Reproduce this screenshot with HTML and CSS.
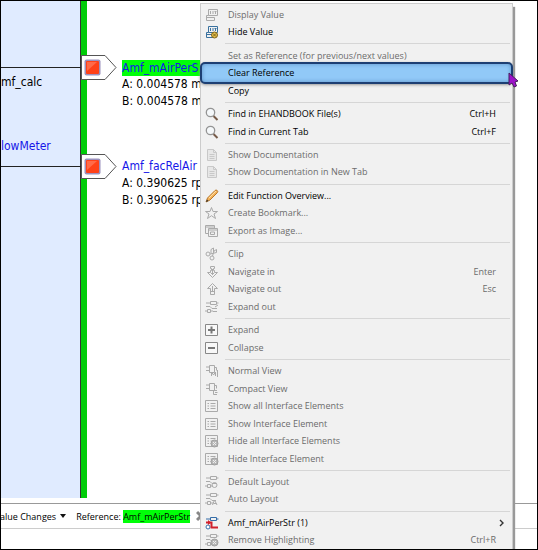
FILE: index.html
```html
<!DOCTYPE html>
<html lang="en">
<head>
<meta charset="utf-8">
<title>Function Overview</title>
<link rel="stylesheet" href="styles.css">
</head>
<body>
<svg class="defs" aria-hidden="true">
  <symbol id="value" viewBox="0 0 14 14"><path d="M3.500 1.500h9v6h-9z" class="o"/><path d="M5.500 3v3M5 3.500h1M8 3v3M10.500 3v3M9.500 3.500h2" class="o"/><path d="M1.500 12.500v-5h2M1.500 9.500h8M1.500 12.500h8v-3" class="o"/></symbol>
  <symbol id="lens" viewBox="0 0 14 14"><path d="M8.500 9l4 4" stroke="#765b49" stroke-width="2"/><circle cx="5.500" cy="5.500" r="4.200" fill="#f5f8fa" stroke="#949494" stroke-width="1.300"/></symbol>
  <symbol id="doc" viewBox="0 0 14 14"><path d="M2.500 1.500h6l3 3v8h-9z" fill="#e7e7e7" stroke="#c8c8c8"/><path d="M8.500 1.500v3h3M4.500 6.500h5M4.500 8.500h5M4.500 10.500h5" class="o"/></symbol>
  <symbol id="down" viewBox="0 0 14 14"><path d="M5.500 1.500h4v2h-1v2h1v2h3l-5 5-5-5h3v-2h1v-2h-1z" class="o"/><path d="M7.500 4v6M6 8.500h3" class="o"/></symbol>
  <symbol id="up" viewBox="0 0 14 14"><path d="M5.500 12.500h4v-6h3l-5-5-5 5h3z" class="o"/><path d="M7.500 4v6M6 9.500h3" class="o"/></symbol>
  <symbol id="blocks" viewBox="0 0 14 14"><path d="M5.500 1.500h6v3h-6zM1 3h4M11.500 3h2M1 6.500h4l2 2h4M2.500 9.500h3v3h-3zM0 11h2M6 11h2" class="o"/></symbol>
  <symbol id="view" viewBox="0 0 14 14"><path d="M4.500 1.500h5v7h-5zM1 3h3M1 6.500h3M9.500 3.500h2v3" class="o"/></symbol>
  <symbol id="list" viewBox="0 0 14 14"><path d="M0.500 1.500h12v11H.5z" class="o"/><path d="M2.500 4.500h1.500M5.500 4.500h5M2.500 7h1.500M5.500 7h5M2.500 9.500h1.500M5.500 9.500h5" class="o"/></symbol>
  <symbol id="off" viewBox="0 0 14 14"><circle cx="9.500" cy="9.500" r="3.500" fill="#b8b8b8" stroke="#a0a0a0"/><path d="M8 8l3 3M11 8l-3 3" stroke="#eee"/></symbol>
</svg>
<main class="app">
  <section class="canvas" aria-label="Diagram">
    <div class="block"></div>
    <span class="line line-a"></span><span class="line line-b"></span>
    <span class="name calc">mf_calc</span>
    <a class="name meter" href="#meter">lowMeter</a>
    <svg class="port port-a" viewBox="0 0 36 26"><path d="M.5.500H24L35 12.500 24 24.500H.5z" fill="#fff" stroke="#555"/><rect x="3.500" y="4.500" width="16" height="16" rx="2" fill="#9b91bd"/><rect x="5" y="6" width="13" height="13" rx="1" fill="#ff4218"/><path d="M6 16V7h10z" fill="#ff6a48"/></svg>
    <svg class="port port-b" viewBox="0 0 36 26"><path d="M.5.500H24L35 12.500 24 24.500H.5z" fill="#fff" stroke="#555"/><rect x="3.500" y="4.500" width="16" height="16" rx="2" fill="#9b91bd"/><rect x="5" y="6" width="13" height="13" rx="1" fill="#ff4218"/><path d="M6 16V7h10z" fill="#ff6a48"/></svg>
    <div class="signal signal-a"><a class="marked" href="#air">Amf_mAirPerS</a><span>A: 0.004578 m</span><span>B: 0.004578 m</span></div>
    <div class="signal signal-b"><a href="#rel">Amf_facRelAir</a><span>A: 0.390625 rp</span><span>B: 0.390625 rp</span></div>
  </section>
  <footer class="bar">
    <button class="drop" type="button">alue Changes <span class="caret"></span></button>
    <span class="ref">Reference: <mark>Amf_mAirPerStr</mark></span>
    <svg class="close" viewBox="0 0 10 12"><path d="M1 2l4 4-4 4M9 2L5 6l4 4" fill="none" stroke="#888" stroke-width="3"/></svg>
  </footer>
  <div class="status"></div>
</main>

<menu class="menu">
  <li><button disabled><svg class="icon"><use href="#value"/></svg><span>Display Value</span></button></li>
  <li><button><svg class="icon blue"><use href="#value"/><circle cx="9.500" cy="10" r="3" fill="#e5c04c" stroke="#80651d"/><path d="M8 8.500l3 3M11 8.500l-3 3" stroke="#80651d"/></svg><span>Hide Value</span></button></li>
  <li class="sep"></li>
  <li><button disabled><i class="icon"></i><span>Set as Reference (for previous/next values)</span></button></li>
  <li class="active"><button><i class="icon"></i><span>Clear Reference</span></button></li>
  <li><button><i class="icon"></i><span>Copy</span></button></li>
  <li class="sep"></li>
  <li><button><svg class="icon"><use href="#lens"/></svg><span>Find in EHANDBOOK File(s)</span><kbd>Ctrl+H</kbd></button></li>
  <li><button><svg class="icon"><use href="#lens"/></svg><span>Find in Current Tab</span><kbd>Ctrl+F</kbd></button></li>
  <li class="sep"></li>
  <li><button disabled><svg class="icon pale"><use href="#doc"/></svg><span>Show Documentation</span></button></li>
  <li><button disabled><svg class="icon pale"><use href="#doc"/></svg><span>Show Documentation in New Tab</span></button></li>
  <li class="sep"></li>
  <li><button><svg class="icon" viewBox="0 0 14 14"><path d="M1 13l1.500-4L10 1.500q1-1 2.200 0t0 2.300L5 11z" fill="#f6b45b" stroke="#b8792e"/><path d="M4 9l7-7" stroke="#ffe0a8"/><path d="M1 13l1-2.500L3.500 12z" fill="#333"/></svg><span>Edit Function Overview...</span></button></li>
  <li><button disabled><svg class="icon" viewBox="0 0 14 14"><path d="M6.500 1.500L8 5.500h4.500L9 8l1.500 4.500-4-2.800-4 2.800L4 8 .5 5.500H5z" class="o"/></svg><span>Create Bookmark...</span></button></li>
  <li><button disabled><svg class="icon" viewBox="0 0 14 14"><path d="M3 9.500H.5v-8h9V4M.5 3h9M3.500 4.500h9v8h-9zM3.500 6h9M5.500 8h4v2.500h-4z" class="o"/></svg><span>Export as Image...</span></button></li>
  <li class="sep"></li>
  <li><button disabled><svg class="icon" viewBox="0 0 14 14"><circle cx="3" cy="7" r="2" class="o"/><circle cx="7" cy="11" r="2" class="o"/><path d="M5 7l6.500-1.500v-3L9 4 7.500 9M6 6V2.500L8.500 1v4" class="o"/></svg><span>Clip</span></button></li>
  <li><button disabled><svg class="icon"><use href="#down"/></svg><span>Navigate in</span><kbd>Enter</kbd></button></li>
  <li><button disabled><svg class="icon"><use href="#up"/></svg><span>Navigate out</span><kbd>Esc</kbd></button></li>
  <li><button disabled><svg class="icon"><use href="#blocks"/><path d="M8 8.500h4M8 11.500h4M10 7l3-2" class="o"/></svg><span>Expand out</span></button></li>
  <li class="sep"></li>
  <li><button disabled><svg class="icon" viewBox="0 0 14 14"><path d="M.5 1.500h12v11H.5z" class="box"/><path d="M3 7h7M6.500 3.500v7" stroke="#777" stroke-width="2"/></svg><span>Expand</span></button></li>
  <li><button disabled><svg class="icon" viewBox="0 0 14 14"><path d="M.5 1.500h12v11H.5z" class="box"/><path d="M3 7h7" stroke="#777" stroke-width="2"/></svg><span>Collapse</span></button></li>
  <li class="sep"></li>
  <li><button disabled><svg class="icon"><use href="#view"/><path d="M6.500 12V8l2 3 2-3v4M12.500 6v7" class="o"/></svg><span>Normal View</span></button></li>
  <li><button disabled><svg class="icon"><use href="#view"/><path d="M12 8.500H8.500v4H12M10 10.500h2.500" class="o"/></svg><span>Compact View</span></button></li>
  <li><button disabled><svg class="icon"><use href="#list"/></svg><span>Show all Interface Elements</span></button></li>
  <li><button disabled><svg class="icon"><use href="#list"/></svg><span>Show Interface Element</span></button></li>
  <li><button disabled><svg class="icon"><use href="#list"/><use href="#off"/></svg><span>Hide all Interface Elements</span></button></li>
  <li><button disabled><svg class="icon"><use href="#list"/><use href="#off"/></svg><span>Hide Interface Element</span></button></li>
  <li class="sep"></li>
  <li><button disabled><svg class="icon"><use href="#blocks"/><circle cx="9.500" cy="10" r="2.500" class="o"/></svg><span>Default Layout</span></button></li>
  <li><button disabled><svg class="icon"><use href="#blocks"/><path d="M7.500 13l2-5 2.500 5M8.500 11.500h3" class="o"/></svg><span>Auto Layout</span></button></li>
  <li class="sep"></li>
  <li><button><svg class="icon" viewBox="0 0 14 14"><path d="M5.500 1.500h6v3h-6zM1 3h4M11.500 3h2" fill="none" stroke="#356da8"/><circle cx="3" cy="11" r="2" fill="#fff" stroke="#356da8"/><path d="M1 6.500h5.500v5H13" fill="none" stroke="#d0202c" stroke-width="2"/><path d="M3 4l3 2.500L3 9z" fill="#d0202c"/></svg><span>Amf_mAirPerStr (1)</span><svg class="more" viewBox="0 0 5 8"><path d="M1 1l3 3-3 3" fill="none" stroke="#333" stroke-width="1.400"/></svg></button></li>
  <li><button disabled><svg class="icon"><use href="#blocks"/><use href="#off"/></svg><span>Remove Highlighting</span><kbd>Ctrl+R</kbd></button></li>
</menu>
<svg class="cursor" viewBox="0 0 11 16"><path d="M1 1v12l3-2 2 4 2.500-1L7 10l3-1z" fill="#9d12c9" stroke="#45205c"/></svg>
</body>
</html>
```
FILE: styles.css
```css
* { box-sizing: border-box; }

body {
  margin: 0;
  height: 100vh;
  position: relative;
  overflow: hidden;
  background: #fff;
  font-family: "Open Sans", "Noto Sans", sans-serif;
  font-size: 9px;
  color: #000;
}

body::after {
  content: "";
  position: absolute;
  inset: 0;
  border: 1px solid #000;
  pointer-events: none;
}

button {
  border: 0;
  padding: 0;
  background: none;
  font: inherit;
  color: inherit;
}

a { color: #1616e8; text-decoration: none; }
.defs { position: absolute; width: 0; height: 0; }
.o { fill: none; stroke: currentColor; }
.box { fill: #f8f8f8; stroke: #888; }

.app { height: 100%; display: flex; flex-direction: column; }

/* Diagram canvas */
.canvas {
  flex: 1;
  position: relative;
  padding-bottom: 5px;
  border-bottom: 1px solid #999;
  font-family: "DejaVu Sans Condensed", "Noto Sans", sans-serif;
  font-size: 12px;
}

.block {
  width: 87px;
  height: 100%;
  background: #e0ebff;
  border-right: 6px solid #00cc08;
  box-shadow: inset -1px 0 #333;
}

.line { position: absolute; left: 0; width: 81px; height: 1px; background: #222; }
.line-a { top: 67px; }
.line-b { top: 166px; }
.name { position: absolute; left: 1px; line-height: 18px; }
.calc { top: 73px; }
.meter { top: 137px; }
.port { position: absolute; left: 81px; width: 36px; height: 26px; }
.port-a { top: 55px; }
.port-b { top: 154px; }

.signal {
  position: absolute;
  left: 122px;
  display: flex;
  flex-direction: column;
  line-height: 17px;
  white-space: nowrap;
}
.signal-a { top: 60px; }
.signal-b { top: 158px; }
.marked { background: #00ff08; line-height: 16px; }

/* Toolbar */
.bar {
  height: 25px;
  display: flex;
  align-items: center;
  border-bottom: 1px solid #ccc;
  white-space: nowrap;
}
.drop { display: flex; align-items: center; gap: 4px; }
.caret { border: 3px solid transparent; border-top: 4px solid #111; border-bottom: 0; }
.ref { margin-left: 10px; }
.ref mark { background: #00ff08; color: inherit; }
.close { width: 10px; height: 12px; margin-left: 6px; }
.status { height: 21px; }

/* Context menu */
.menu {
  position: absolute;
  top: 3px;
  left: 200px;
  right: 25px;
  bottom: 1px;
  display: flex;
  flex-direction: column;
  margin: 0;
  padding: 2px 0 0;
  list-style: none;
  background: #f1f1f1;
  border: 1px solid #ccc;
  border-bottom: 0;
  box-shadow: 2px 4px 1px #999;
}

.menu li { flex: 1; min-height: 0; display: flex; position: relative; }
.menu .sep { flex: 0 0 6px; align-items: center; }
.sep::before { content: ""; flex: 1; height: 1px; margin: 0 2px 0 24px; background: #d6d6d6; }

.menu button {
  flex: 1;
  display: flex;
  align-items: center;
  padding: 0 16px 0 4px;
  line-height: 16px;
  text-align: left;
  white-space: nowrap;
  position: relative;
}
.menu button:disabled { color: #6c6c6c; }
.icon { width: 14px; height: 14px; margin-right: 9px; flex: none; color: #aaa; }
.menu .pale { color: #c8c8c8; }
.menu .blue { color: #39719f; }
kbd { font: inherit; margin-left: auto; }
.more { width: 5px; height: 8px; margin-left: auto; margin-right: -8px; }

.active::before {
  content: "";
  position: absolute;
  inset: -2px -1px;
  border: 2px solid #1d3f73;
  border-radius: 5px;
  background: #91c9f7;
  box-shadow: inset 0 0 4px #5c92c8, 0 1px 3px #999;
}

.cursor { position: absolute; top: 72px; right: 19px; width: 11px; height: 16px; }
```
